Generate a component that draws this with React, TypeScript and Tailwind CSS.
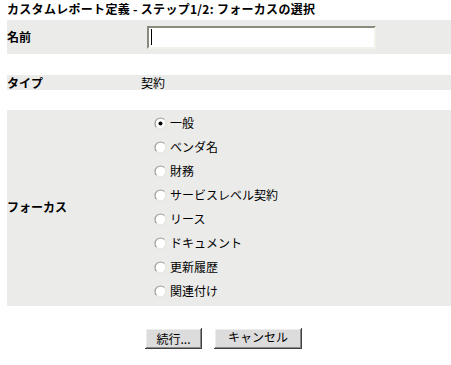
import React from "react";

function Radio({ checked }: { checked?: boolean }) {
  return (
    <svg width="13" height="13" viewBox="0 0 13 13" className="shrink-0">
      <circle cx="6.5" cy="6.5" r="5.5" fill="#ffffff" />
      <path d="M2.6 10.4 A5.5 5.5 0 0 1 10.4 2.6" fill="none" stroke="#9a9a90" strokeWidth="1.2" />
      <path d="M10.4 2.6 A5.5 5.5 0 0 1 2.6 10.4" fill="none" stroke="#e4e2da" strokeWidth="1.2" />
      {checked && <circle cx="6.5" cy="6.5" r="2" fill="#000000" />}
    </svg>
  );
}

const options = [
  "一般",
  "ベンダ名",
  "財務",
  "サービスレベル契約",
  "リース",
  "ドキュメント",
  "更新履歴",
  "関連付け",
];

const btn =
  "h-[21px] bg-[#dcdcdc] text-[12px] leading-none text-black shadow-[inset_-1px_-1px_#404040,inset_1px_1px_#ffffff,inset_-2px_-2px_#8a8a8a,inset_2px_2px_#ececec] flex items-center justify-center";

export default function App() {
  return (
    <div
      className="w-[451px] h-[365px] bg-white text-black text-[12px] leading-[14px]"
      style={{ fontFamily: '"Noto Sans CJK JP", "Noto Sans", sans-serif' }}
    >
      <div className="pl-[7px] pt-[2px] h-[20px] font-bold text-[12px] leading-[14px] tracking-[0.3px]">
        カスタムレポート定義 - ステップ1/2: フォーカスの選択
      </div>

      <div className="ml-[7px] h-[34px] bg-[#ebebea] grid grid-cols-[134px_1fr] items-center">
        <div className="font-bold">名前</div>
        <div className="pl-[6px]">
          <div className="w-[229px] h-[23px] bg-white border-t-2 border-l-2 border-t-[#8a8a7e] border-l-[#8a8a7e] border-b-2 border-r-2 border-b-[#f2f2ea] border-r-[#f2f2ea] flex items-center pl-[2px]">
            <div className="w-[1px] h-[16px] bg-black" />
          </div>
        </div>
      </div>

      <div className="h-[21px]" />

      <div className="ml-[7px] h-[15px] bg-[#ebebea] grid grid-cols-[134px_1fr] items-center">
        <div className="font-bold">タイプ</div>
        <div>契約</div>
      </div>

      <div className="h-[20px]" />

      <div className="ml-[7px] bg-[#ebebea] grid grid-cols-[134px_1fr] items-center pt-[1px] pb-[3px]">
        <div className="font-bold">フォーカス</div>
        <div className="flex flex-col pl-[13px]">
          {options.map((o, i) => (
            <div key={o} className="h-[24px] flex items-center gap-[3px]">
              <Radio checked={i === 0} />
              <span>{o}</span>
            </div>
          ))}
        </div>
      </div>

      <div className="flex gap-[12px] pl-[145px] pt-[22px]">
        <div className={btn + " w-[57px]"}>続行...</div>
        <div className={btn + " w-[88px] pb-[4px]"}>キャンセル</div>
      </div>
    </div>
  );
}
